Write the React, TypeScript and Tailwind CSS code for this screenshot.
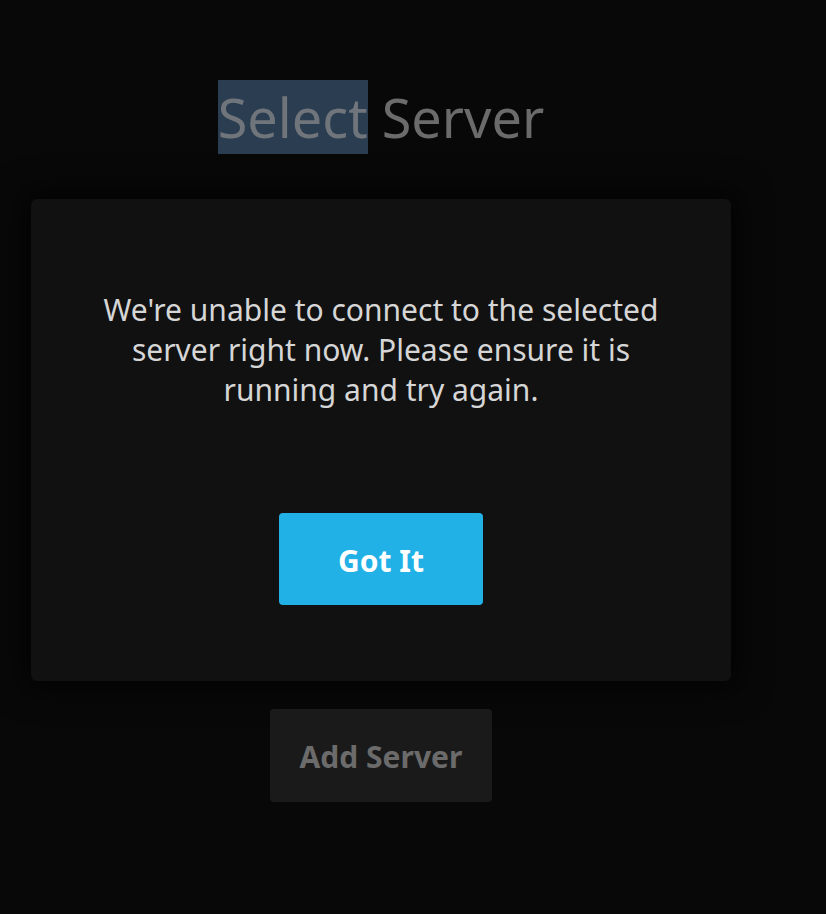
import React from "react";

export default function App() {
  return (
    <div
      className="min-h-[914px] w-full bg-[#080808]"
      style={{ fontFamily: '"Noto Sans", sans-serif' }}
    >
      <div className="w-[762px] flex flex-col items-center">
        <h1 className="mt-[82px] text-[54px] leading-[71px] font-normal text-[#6b6b6b] whitespace-nowrap">
          <span className="bg-[#2b3d50] text-[#70757b]">Select</span> Server
        </h1>
        <div className="mt-[46px] w-[700px] h-[482px] rounded-[6px] bg-[#111111] shadow-[0_0_30px_10px_rgba(0,0,0,0.6)] flex flex-col items-center">
          <p className="mt-[91px] w-[590px] text-center text-[30px] leading-[40px] text-[#d6d6d6]">
            We're unable to connect to the selected server right now. Please ensure it is running and try again.
          </p>
          <button className="mt-[103px] w-[204px] h-[92px] pt-[3px] rounded-[4px] bg-[#22b1e7] text-white text-[30px] font-bold">
            Got It
          </button>
        </div>
        <button className="mt-[28px] w-[222px] h-[93px] pt-[2px] rounded-[4px] bg-[#1a1a1a] text-[#6b6b6b] text-[30px] font-bold">
          Add Server
        </button>
      </div>
    </div>
  );
}
